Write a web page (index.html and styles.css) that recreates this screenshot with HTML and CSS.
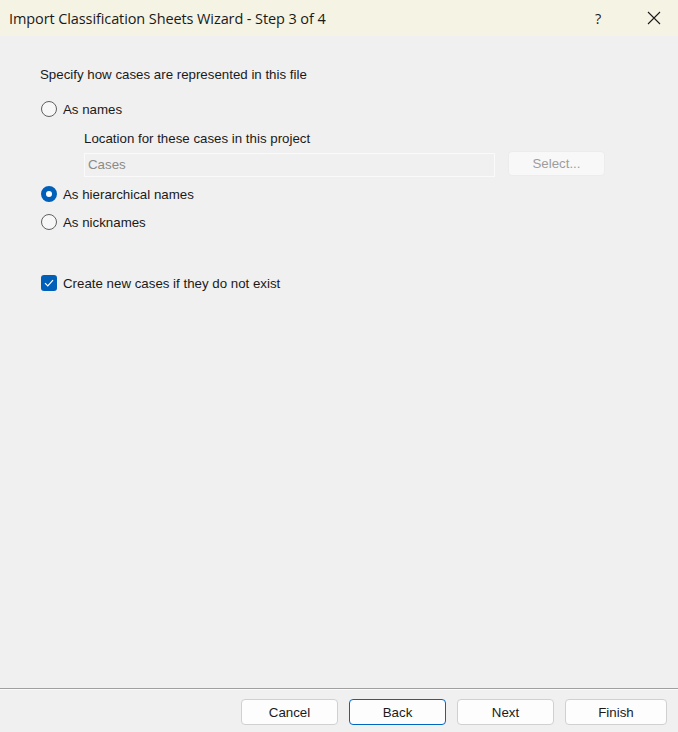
FILE: index.html
```html
<!DOCTYPE html>
<html>
<head>
<meta charset="utf-8">
<link rel="stylesheet" href="styles.css">
</head>
<body>
<div class="dialog">
  <div class="titlebar">
    <span class="title">Import Classification Sheets Wizard - Step 3 of 4</span>
    <span class="help">?</span>
    <svg class="close" width="14" height="14" viewBox="0 0 14 14"><path d="M1 1L13 13M13 1L1 13" stroke="#1a1a1a" stroke-width="1.1" fill="none"/></svg>
  </div>
  <div class="content">
    <div class="heading">Specify how cases are represented in this file</div>
    <div class="option opt-first"><span class="radio"></span><span>As names</span></div>
    <div class="location">
      <div class="loc-label">Location for these cases in this project</div>
      <div class="loc-row">
        <div class="input">Cases</div>
        <div class="select-btn">Select...</div>
      </div>
    </div>
    <div class="option opt-hier"><span class="radio checked"></span><span>As hierarchical names</span></div>
    <div class="option opt-nick"><span class="radio"></span><span>As nicknames</span></div>
    <div class="option opt-check"><span class="checkbox"><svg width="10" height="8" viewBox="0 0 10 8"><path d="M1 4.2L3.8 7L9 1.2" stroke="#fff" stroke-width="1.2" fill="none"/></svg></span><span>Create new cases if they do not exist</span></div>
  </div>
  <div class="footer">
    <div class="btn">Cancel</div>
    <div class="btn primary">Back</div>
    <div class="btn">Next</div>
    <div class="btn finish">Finish</div>
  </div>
</div>
</body>
</html>
```
FILE: styles.css
```css
html, body { margin: 0; padding: 0; }
body {
  width: 678px; height: 732px; overflow: hidden;
  background: #f0f0f0;
  font-family: "Liberation Sans", Arial, sans-serif;
  font-size: 13.3px; color: #1a1a1a;
}
.dialog { display: flex; flex-direction: column; height: 732px; }
.titlebar {
  height: 36px; background: #f5f3e4;
  display: flex; align-items: center;
  padding-left: 9px; box-sizing: border-box;
}
.title { font-family: "Open Sans", "Noto Sans", sans-serif; font-size: 14.5px; color: #1a1a1a; flex: 1; letter-spacing: -0.1px; }
.help { font-family: "Open Sans", sans-serif; font-size: 14.5px; width: 14px; margin-right: 38px; }
.close { margin-right: 17px; }
.content { flex: 1; padding: 30px 0 0 40px; }
.heading { height: 18px; line-height: 18px; margin-bottom: 16px; }
.option { display: flex; align-items: center; height: 18px; }
.option span:last-child { margin-left: 6px; }
.radio {
  width: 14px; height: 14px; border: 1px solid #606060; border-radius: 50%;
  background: #f7f7f7; margin-left: 1px; box-sizing: content-box;
}
.radio.checked { background: #fff; border: 5px solid #005fb8; width: 6px; height: 6px; }
.location { padding-left: 44px; margin-top: 12px; }
.loc-label { height: 18px; line-height: 18px; }
.loc-row { display: flex; align-items: flex-start; margin-top: 5px; }
.input {
  width: 406px; height: 22px; border: 1px solid #fafafa; background: #f0f0f0;
  color: #8a8a8a; line-height: 22px; padding-left: 3px; box-sizing: content-box;
}
.select-btn {
  margin-left: 13px; margin-top: -2px; width: 97px; height: 25px; background: #f8f8f8;
  border: 1px solid #ececec; border-radius: 4px; color: #9d9d9d;
  display: flex; align-items: center; justify-content: center; box-sizing: border-box;
}
.opt-hier { margin-top: 8px; }
.opt-nick { margin-top: 10px; }
.opt-check { margin-top: 43px; }
.checkbox {
  width: 16px; height: 16px; background: #005fb8; border-radius: 3px; margin-left: 1px;
  display: flex; align-items: center; justify-content: center;
}
.footer {
  height: 44px; border-top: 1px solid #a0a0a0; box-shadow: inset 0 1px 0 #fbfbfb;
  display: flex; justify-content: flex-end; gap: 11px;
  padding: 10px 11px 0 0; box-sizing: border-box;
}
.btn {
  width: 97px; height: 26px; background: #fdfdfd; border: 1px solid #d0d0d0; border-radius: 4px;
  box-sizing: border-box; display: flex; align-items: center; justify-content: center;
  font-size: 13.3px; color: #1a1a1a;
}
.btn.primary { border-color: #0067c0; }
.btn.finish { width: 102px; }
```
